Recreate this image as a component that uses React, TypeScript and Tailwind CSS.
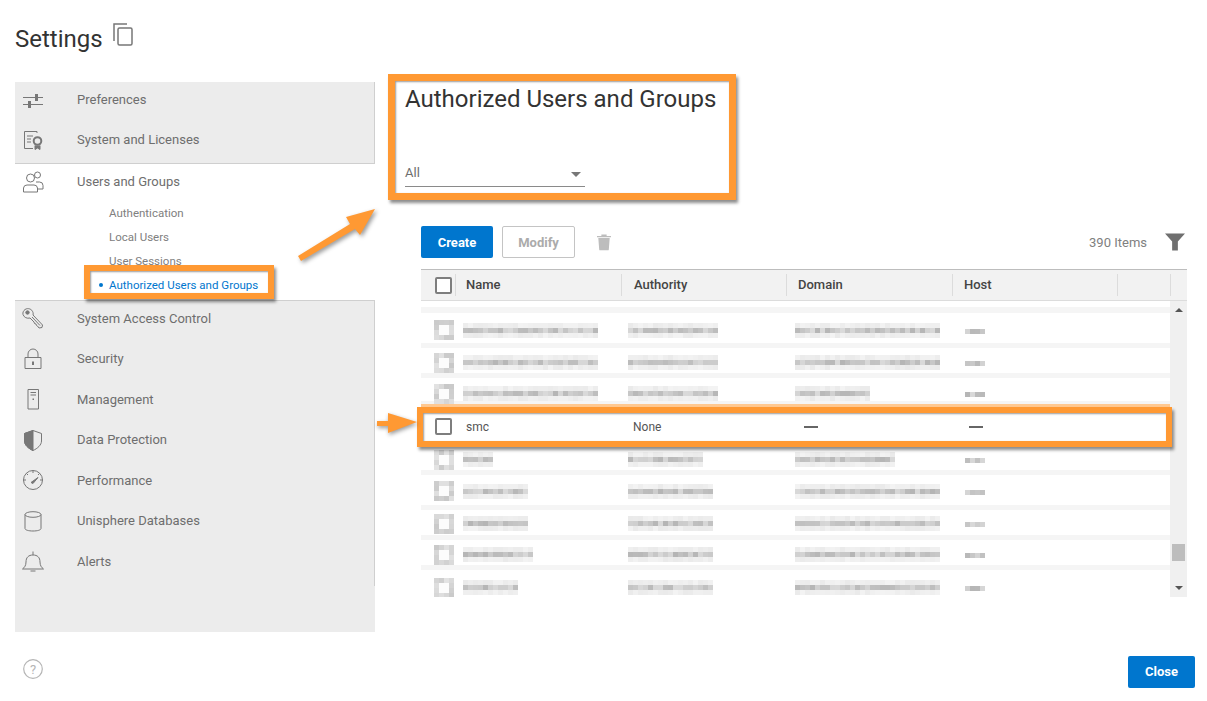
const strokeIcon = "w-[22px] h-[22px] text-[#777]";

function Svg({ children }: { children: React.ReactNode }) {
  return (
    <svg className={strokeIcon} viewBox="0 0 22 22" fill="none" stroke="currentColor" strokeWidth={1}>
      {children}
    </svg>
  );
}

const icons: Record<string, React.ReactNode> = {
  prefs: (
    <Svg>
      <path d="M1 8.500h20M1 15.500h20" />
      <path d="M14.500 5v7M7.500 12v7" strokeWidth={3} />
    </Svg>
  ),
  license: (
    <Svg>
      <path d="M15 4V2.500H2.500v17H11" />
      <path d="M5 7h6M5 10h4M5 13h4" />
      <circle cx="15.500" cy="12" r="3.800" strokeWidth={2} />
      <path d="M13 16.500v4l2.500-1.500 2.500 1.500v-4" fill="currentColor" />
    </Svg>
  ),
  users: (
    <Svg>
      <circle cx="8.500" cy="7" r="4" />
      <circle cx="15.500" cy="4" r="3" />
      <path d="M1.500 21v-4a3.500 3.500 0 0 1 3.500-3h7a3.500 3.500 0 0 1 3.500 3v4z" />
      <path d="M14 11h3.500a3.500 3.500 0 0 1 3.500 3.500v3.500h-5" />
    </Svg>
  ),
  key: (
    <Svg>
      <path d="M3 2.500c3-2 7-.5 8 3 .3 1 .2 1.800 0 2.500l9.500 10-.5 2.500-3 .5-1.500-2-1-.5-.5-1.500-1.500-.5-.5-1.500L8 11c-3 .8-6-.5-7-3.500-.5-2 .5-3.800 2-5z" />
      <circle cx="5.500" cy="5.500" r="1.700" fill="currentColor" />
      <path d="M10 10l8 8.500" />
    </Svg>
  ),
  lock: (
    <Svg>
      <path d="M3 9.500h16v11H3z" />
      <path d="M6 9.500V6a5 5 0 0 1 10 0v3.500" />
      <rect x="10" y="13.500" width="2" height="3.500" fill="currentColor" stroke="none" />
    </Svg>
  ),
  server: (
    <Svg>
      <path d="M6 1.500h10.500v19.500H6z" />
      <path d="M8.500 4.500h5.500M8.500 7h5.500" />
      <rect x="10.500" y="10.500" width="1.500" height="1.500" fill="currentColor" stroke="none" />
    </Svg>
  ),
  shield: (
    <Svg>
      <path d="M2.500 4.500 11 1.500l8.500 3V12c0 4-4 7.500-8.500 9.500C6.500 19.500 2.500 16 2.500 12z" />
      <path d="M11 1.500 2.500 4.500V12c0 4 4 7.500 8.500 9.500z" fill="currentColor" />
    </Svg>
  ),
  gauge: (
    <Svg>
      <circle cx="11" cy="11" r="9.500" />
      <path d="M11 1.500v2.500M1.500 11H4M18 11h2.500M4.500 4.500l1.500 1.500M17.500 4.500 16 6" />
      <path d="M9 13.500 16 8.500 11 14.500z" fill="currentColor" />
    </Svg>
  ),
  db: (
    <Svg>
      <path d="M3 4.500v14c0 1.500 3.500 2.500 8 2.500s8-1 8-2.500v-14" />
      <ellipse cx="11" cy="4.500" rx="8" ry="2.800" />
    </Svg>
  ),
  bell: (
    <Svg>
      <path d="M.5 19c2-1.500 3.500-3.500 3.500-7 0-4.500 2.500-7 7-7s7 2.500 7 7c0 3.500 1.500 5.500 3.500 7z" />
      <path d="M11 1.500V5M8.500 21h5" />
    </Svg>
  ),
};

function Item({ icon, label, h }: { icon: string; label: string; h: string }) {
  return (
    <div className={`flex items-center ${h}`}>
      <div className="w-[62px] pl-[7px] flex shrink-0">{icons[icon]}</div>
      <span className="text-[13px] text-[#6e6e6e]">{label}</span>
    </div>
  );
}

// pixelated "redacted" block, cells are 5px like the reference
function Mosaic({ w, h, seed, ring }: { w: number; h: number; seed: number; ring?: boolean }) {
  const cols = Math.round(w / 5);
  const rows = Math.round(h / 5);
  const cells = [];
  for (let y = 0; y < rows; y++) {
    for (let x = 0; x < cols; x++) {
      const r = Math.abs(Math.sin((x + 1) * 12.9898 + (y + 1) * 78.233 + seed * 37.7) * 43758.5453) % 1;
      let strength = (y === Math.floor(rows / 2) ? 62 : 16) * (0.55 + r * 0.6);
      if (ring) {
        const edge = x === 0 || y === 0 || x === cols - 1 || y === rows - 1;
        strength = edge ? 25 + r * 28 : 0;
      }
      const v = Math.round(252 - strength);
      cells.push(
        <div key={`${x}-${y}`} className="w-[5px] h-[5px]" style={{ backgroundColor: `rgb(${v},${v},${v})` }} />
      );
    }
  }
  return (
    <div className="flex flex-wrap" style={{ width: cols * 5 }}>
      {cells}
    </div>
  );
}

const rows = [
  { h: "h-[35px] pt-[4px]", n: 135, a: 90, d: 145 },
  { h: "h-[30px] pt-[4px]", n: 135, a: 90, d: 145 },
  { h: "h-[28px] pt-[8px]", n: 135, a: 90, d: 75 },
  null,
  { h: "h-[30px] pt-[4px]", n: 30, a: 75, d: 100 },
  { h: "h-[35px] pt-[2px]", n: 65, a: 85, d: 145 },
  { h: "h-[30px] pt-[2px]", n: 65, a: 85, d: 145 },
  { h: "h-[30px] pt-[4px]", n: 70, a: 85, d: 145 },
];

function BlurRow({ r, i }: { r: { h: string; n: number; a: number; d: number }; i: number }) {
  return (
    <div className={`flex items-center border-b-[5px] border-[#f5f5f5] ${r.h}`}>
      <div className="w-[42px] pl-[13px] shrink-0">
        <Mosaic w={20} h={20} seed={i + 1} ring />
      </div>
      <div className="w-[165px] shrink-0">
        <Mosaic w={r.n} h={15} seed={i + 11} />
      </div>
      <div className="w-[167px] shrink-0">
        <Mosaic w={r.a} h={15} seed={i + 21} />
      </div>
      <div className="w-[170px] shrink-0">
        <Mosaic w={r.d} h={15} seed={i + 31} />
      </div>
      <div className="pt-[2px]">
        <Mosaic w={20} h={5} seed={i + 41} />
      </div>
    </div>
  );
}

function Checkbox() {
  return <div className="w-[17px] h-[17px] rounded-[2px] border-2 border-[#7e7e7e] bg-white" />;
}

export default function App() {
  return (
    <div className="relative w-[1207px] h-[701px] overflow-hidden bg-white font-[family-name:Roboto,sans-serif]">
      {/* title */}
      <div className="h-[82px] pl-[15px] pt-[23px] flex items-start gap-[10px]">
        <h1 className="text-[24px] leading-[33px] text-[#333]">Settings</h1>
        <svg className="w-[20px] h-[23px] text-[#777]" viewBox="0 0 20 23" fill="none" stroke="currentColor" strokeWidth={1.500}>
          <path d="M1 18V1h13" />
          <rect x="5" y="5" width="14" height="17" rx="1.500" />
        </svg>
      </div>

      <div className="flex h-[550px]">
        {/* side nav */}
        <div className="ml-[15px] w-[360px] shrink-0 flex flex-col">
          <div className="h-[82px] bg-[#ececec] border-r border-b border-[#cfcfcf]">
            <Item icon="prefs" label="Preferences" h="h-[35px]" />
            <Item icon="license" label="System and Licenses" h="h-[45px]" />
          </div>
          <div className="h-[136px]">
            <Item icon="users" label="Users and Groups" h="h-[35px]" />
            <div className="pl-[94px] pt-[2px] text-[11.5px] text-[#808080]">
              <div className="h-[24px] leading-[24px]">Authentication</div>
              <div className="h-[24px] leading-[24px]">Local Users</div>
              <div className="h-[24px] leading-[24px]">User Sessions</div>
              <div className="h-[24px] leading-[24px] text-[#0076ce] relative">
                <span className="absolute left-[-10px] top-[10px] w-[4px] h-[4px] rounded-full bg-[#0076ce]" />
                Authorized Users and Groups
              </div>
            </div>
          </div>
          <div className="flex-1 bg-[#ececec] relative border-t border-[#cfcfcf]">
            <div className="absolute right-0 top-0 h-[285px] w-px bg-[#cfcfcf]" />
            <div className="-mt-[3px]">
              <Item icon="key" label="System Access Control" h="h-[40.5px]" />
              <Item icon="lock" label="Security" h="h-[40.5px]" />
              <Item icon="server" label="Management" h="h-[40.5px]" />
              <Item icon="shield" label="Data Protection" h="h-[40.5px]" />
              <Item icon="gauge" label="Performance" h="h-[40.5px]" />
              <Item icon="db" label="Unisphere Databases" h="h-[40.5px]" />
              <Item icon="bell" label="Alerts" h="h-[40.5px]" />
            </div>
          </div>
        </div>

        {/* right panel */}
        <div className="flex-1 pl-[30px]">
          <h2 className="text-[24px] leading-[34px] text-[#333]">Authorized Users and Groups</h2>
          <div className="mt-[47px] w-[180px] h-[24px] border-b border-[#8a8a8a] flex items-center justify-between pr-[4px]">
            <span className="text-[13px] text-[#6e6e6e] pb-[4px]">All</span>
            <span className="w-0 h-0 border-x-[5px] border-x-transparent border-t-[5px] border-t-[#777]" />
          </div>

          <div className="ml-[16px] w-[766px] mt-[39px]">
            {/* toolbar */}
            <div className="h-[32px] flex items-center">
              <button className="w-[72px] h-[32px] pt-[1px] rounded-[2px] bg-[#0076ce] text-white text-[13px] font-bold">Create</button>
              <button className="ml-[9px] w-[73px] h-[32px] pt-[1px] rounded-[2px] border border-[#c4c4c4] text-[#ababab] text-[13px] font-bold">Modify</button>
              <svg className="ml-[22px] w-[14px] h-[18px] text-[#bdbdbd]" viewBox="0 0 16 19" fill="currentColor">
                <path d="M0 2.500h5V1h6v1.500h5V4H0zM1.500 5h13l-1 13a1 1 0 0 1-1 1h-9a1 1 0 0 1-1-1z" />
              </svg>
              <span className="ml-auto pt-[1px] text-[13px] text-[#808080]">390 Items</span>
              <svg className="ml-[18px] mr-[2px] w-[20px] h-[18px] text-[#6f6f6f]" viewBox="0 0 21 18" fill="currentColor">
                <path d="M0 0h21l-7.500 8.500V18h-6V8.500z" />
              </svg>
            </div>

            {/* table head */}
            <div className="mt-[11px] h-[32px] bg-[#f2f2f2] border-t border-b border-t-[#bdbdbd] border-b-[#dcdcdc] flex items-center text-[13px] text-[#444] font-medium">
              <div className="w-[35px] h-[22px] flex items-center pl-[14px] border-r border-[#dcdcdc] shrink-0">
                <Checkbox />
              </div>
              <div className="w-[166px] h-[22px] leading-[22px] pl-[10px] border-r border-[#dcdcdc] shrink-0">Name</div>
              <div className="w-[165px] h-[22px] leading-[22px] pl-[12px] border-r border-[#dcdcdc] shrink-0">Authority</div>
              <div className="w-[166px] h-[22px] leading-[22px] pl-[11px] border-r border-[#dcdcdc] shrink-0">Domain</div>
              <div className="w-[165px] h-[22px] leading-[22px] pl-[11px] border-r border-[#dcdcdc] shrink-0">Host</div>
              <div className="w-[53px] h-[22px] border-r border-[#dcdcdc] shrink-0" />
            </div>

            {/* table body */}
            <div className="flex h-[296px]">
              <div className="flex-1 overflow-hidden">
                <div className="h-[12px] border-b-[6px] border-[#f5f5f5]" />
                {rows.map((r, i) =>
                  r ? (
                    <BlurRow key={i} r={r} i={i} />
                  ) : (
                    <div key={i} className="h-[39px] pt-[2px] flex items-center text-[12px] text-[#555]">
                      <div className="w-[45px] pl-[14px] shrink-0">
                        <Checkbox />
                      </div>
                      <div className="w-[167px] shrink-0">smc</div>
                      <div className="w-[171px] shrink-0">None</div>
                      <div className="w-[165px] shrink-0">
                        <div className="w-[14px] h-[2px] bg-[#666]" />
                      </div>
                      <div className="w-[14px] h-[2px] bg-[#666]" />
                    </div>
                  )
                )}
                <div className="flex items-center h-[27px] pt-[8px]">
                  <div className="w-[42px] pl-[13px] shrink-0">
                    <Mosaic w={20} h={20} seed={9} ring />
                  </div>
                  <div className="w-[165px] shrink-0">
                    <Mosaic w={55} h={15} seed={19} />
                  </div>
                  <div className="w-[167px] shrink-0">
                    <Mosaic w={85} h={15} seed={29} />
                  </div>
                  <div className="w-[170px] shrink-0">
                    <Mosaic w={145} h={15} seed={39} />
                  </div>
                  <div className="pt-[2px]">
                    <Mosaic w={20} h={5} seed={49} />
                  </div>
                </div>
              </div>
              {/* scrollbar */}
              <div className="w-[17px] shrink-0 bg-[#f0f0f0] flex flex-col items-center pt-[7px] pb-[7px]">
                <span className="w-0 h-0 border-x-[4px] border-x-transparent border-b-[4px] border-b-[#555]" />
                <div className="mt-[232px] w-[13px] h-[17px] bg-[#bdbdbd]" />
                <span className="mt-auto w-0 h-0 border-x-[4px] border-x-transparent border-t-[4px] border-t-[#555]" />
              </div>
            </div>
          </div>
        </div>
      </div>

      {/* footer */}
      <div className="flex justify-between pl-[23px] pr-[12px] pt-[24px]">
        <svg className="w-[20px] h-[20px] mt-[3px] text-[#b5b5b5]" viewBox="0 0 20 20" fill="none" stroke="currentColor" strokeWidth={1.200}>
          <circle cx="10" cy="10" r="9.300" />
          <text x="10" y="14.500" textAnchor="middle" fontSize="13" fill="currentColor" stroke="none">?</text>
        </svg>
        <button className="w-[67px] h-[32px] rounded-[2px] bg-[#0076ce] text-white text-[13px] font-bold">Close</button>
      </div>

      {/* callouts on top of the screenshot */}
      <div className="absolute left-[388px] top-[74px] w-[348px] h-[126px] border-[7px] border-[#ff9933] shadow-[2px_3px_3px_rgba(0,0,0,0.45),inset_1px_1px_2px_rgba(0,0,0,0.4)]" />
      <div className="absolute left-[84px] top-[265px] w-[190px] h-[34px] border-[6px] border-[#ff9933] shadow-[2px_3px_3px_rgba(0,0,0,0.45),inset_1px_1px_2px_rgba(0,0,0,0.4)]" />
      <div className="absolute left-[421px] top-[404px] w-[749px] h-[4px] bg-[#ffc890]" />
      <div className="absolute left-[417px] top-[407px] w-[755px] h-[40px] border-[6px] border-[#ff9933] shadow-[2px_3px_3px_rgba(0,0,0,0.45),inset_1px_1px_2px_rgba(0,0,0,0.4)]" />
      <svg className="absolute left-[290px] top-[200px] w-[95px] h-[70px] drop-shadow-[2px_2px_2px_rgba(0,0,0,0.4)]" viewBox="0 0 95 70" fill="#ff9933">
        <path d="M8 56 60 24l-4-7 29-8-15 26-5-6L11 61z" />
      </svg>
      <svg className="absolute left-[375px] top-[410px] w-[45px] h-[30px] drop-shadow-[1px_2px_2px_rgba(0,0,0,0.4)]" viewBox="0 0 45 30" fill="#ff9933">
        <path d="M2 11h11V3l29 9-29 11v-7H2z" />
      </svg>
    </div>
  );
}
